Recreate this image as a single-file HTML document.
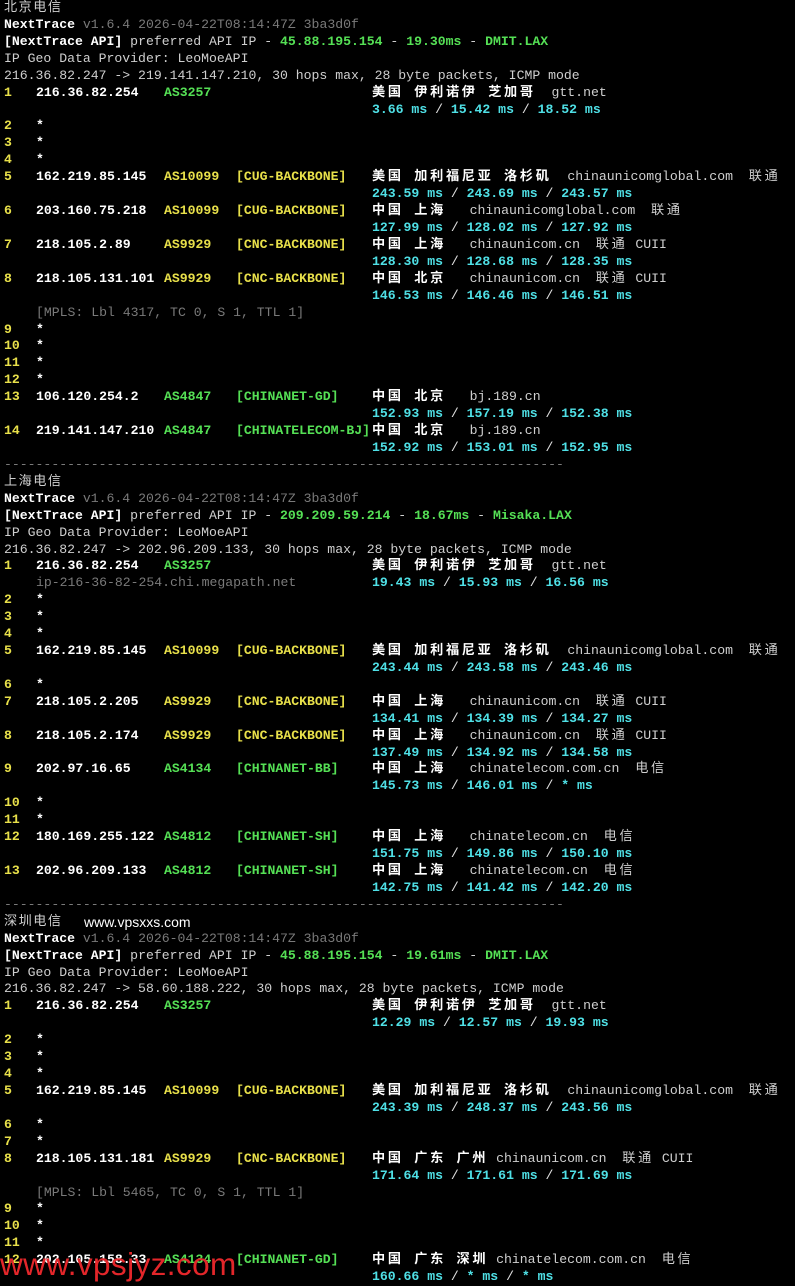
<!DOCTYPE html>
<html><head><meta charset="utf-8"><style>
html,body{margin:0;padding:0;background:#000;}
body{width:795px;height:1280px;overflow:hidden;position:relative;font-family:"Liberation Mono","Noto Sans CJK SC",monospace;font-size:13.15px;color:#cfcfcf;}
#t{position:absolute;left:0;top:0;width:795px;}
.r{position:relative;height:16.93px;line-height:16.93px;white-space:pre;padding-left:4px;}
.r i{font-style:normal;position:absolute;top:0;}
.h{left:4px;color:#e8e04a;font-weight:bold;}
.a1{left:36px;color:#fff;font-weight:bold;}
.a2{left:164px;font-weight:bold;}
.a3{left:236px;font-weight:bold;}
.a4{left:372px;}
.g{color:#55e055;}
.y{color:#e8e04a;}
.cy{color:#4fe0e6;font-weight:bold;}
.w{color:#fff;font-weight:bold;}
.gr{color:#7a7a7a;}
b.c{color:#fff;font-weight:bold;letter-spacing:2.7px;font-family:"Liberation Mono","Noto Sans CJK SC",monospace;}
span.c2{letter-spacing:2.7px;color:#cfcfcf;}
.sl{color:#e0e0e0;font-weight:normal;}
.star{left:36px;color:#fff;font-weight:bold;}
.hd{letter-spacing:1.5px;color:#cfcfcf;}
.wm{position:absolute;left:0;top:1246px;font-family:"Liberation Sans",sans-serif;font-size:31.5px;color:#e3262a;letter-spacing:0.4px;}
</style></head><body><div id="t">
<div class="r"><span class="hd">北京电信</span></div>
<div class="r"><span class="w">NextTrace</span> <span class="gr">v1.6.4 2026-04-22T08:14:47Z 3ba3d0f</span></div>
<div class="r"><span class="w">[NextTrace API]</span> preferred API IP - <span class="g" style="font-weight:bold">45.88.195.154</span> - <span class="g" style="font-weight:bold">19.30ms</span> - <span class="g" style="font-weight:bold">DMIT.LAX</span></div>
<div class="r">IP Geo Data Provider: LeoMoeAPI</div>
<div class="r">216.36.82.247 -&gt; 219.141.147.210, 30 hops max, 28 byte packets, ICMP mode</div>
<div class="r"><i class="h">1</i><i class="a1">216.36.82.254</i><i class="a2 g">AS3257</i><i class="a4"><b class="c">美国 伊利诺伊 芝加哥</b>  gtt.net</i></div>
<div class="r"><i class="a4 cy">3.66 ms <span class="sl">/</span> 15.42 ms <span class="sl">/</span> 18.52 ms</i></div>
<div class="r"><i class="h">2</i><i class="star">*</i></div>
<div class="r"><i class="h">3</i><i class="star">*</i></div>
<div class="r"><i class="h">4</i><i class="star">*</i></div>
<div class="r"><i class="h">5</i><i class="a1">162.219.85.145</i><i class="a2 y">AS10099</i><i class="a3 y">[CUG-BACKBONE]</i><i class="a4"><b class="c">美国 加利福尼亚 洛杉矶</b>  chinaunicomglobal.com  <span class="c2">联通</span></i></div>
<div class="r"><i class="a4 cy">243.59 ms <span class="sl">/</span> 243.69 ms <span class="sl">/</span> 243.57 ms</i></div>
<div class="r"><i class="h">6</i><i class="a1">203.160.75.218</i><i class="a2 y">AS10099</i><i class="a3 y">[CUG-BACKBONE]</i><i class="a4"><b class="c">中国 上海</b>   chinaunicomglobal.com  <span class="c2">联通</span></i></div>
<div class="r"><i class="a4 cy">127.99 ms <span class="sl">/</span> 128.02 ms <span class="sl">/</span> 127.92 ms</i></div>
<div class="r"><i class="h">7</i><i class="a1">218.105.2.89</i><i class="a2 y">AS9929</i><i class="a3 y">[CNC-BACKBONE]</i><i class="a4"><b class="c">中国 上海</b>   chinaunicom.cn  <span class="c2">联通</span> CUII</i></div>
<div class="r"><i class="a4 cy">128.30 ms <span class="sl">/</span> 128.68 ms <span class="sl">/</span> 128.35 ms</i></div>
<div class="r"><i class="h">8</i><i class="a1">218.105.131.101</i><i class="a2 y">AS9929</i><i class="a3 y">[CNC-BACKBONE]</i><i class="a4"><b class="c">中国 北京</b>   chinaunicom.cn  <span class="c2">联通</span> CUII</i></div>
<div class="r"><i class="a4 cy">146.53 ms <span class="sl">/</span> 146.46 ms <span class="sl">/</span> 146.51 ms</i></div>
<div class="r"><i class="gr" style="left:36px">[MPLS: Lbl 4317, TC 0, S 1, TTL 1]</i></div>
<div class="r"><i class="h">9</i><i class="star">*</i></div>
<div class="r"><i class="h">10</i><i class="star">*</i></div>
<div class="r"><i class="h">11</i><i class="star">*</i></div>
<div class="r"><i class="h">12</i><i class="star">*</i></div>
<div class="r"><i class="h">13</i><i class="a1">106.120.254.2</i><i class="a2 g">AS4847</i><i class="a3 g">[CHINANET-GD]</i><i class="a4"><b class="c">中国 北京</b>   bj.189.cn</i></div>
<div class="r"><i class="a4 cy">152.93 ms <span class="sl">/</span> 157.19 ms <span class="sl">/</span> 152.38 ms</i></div>
<div class="r"><i class="h">14</i><i class="a1">219.141.147.210</i><i class="a2 g">AS4847</i><i class="a3 g">[CHINATELECOM-BJ]</i><i class="a4"><b class="c">中国 北京</b>   bj.189.cn</i></div>
<div class="r"><i class="a4 cy">152.92 ms <span class="sl">/</span> 153.01 ms <span class="sl">/</span> 152.95 ms</i></div>
<div class="r gr">-----------------------------------------------------------------------</div>
<div class="r"><span class="hd">上海电信</span></div>
<div class="r"><span class="w">NextTrace</span> <span class="gr">v1.6.4 2026-04-22T08:14:47Z 3ba3d0f</span></div>
<div class="r"><span class="w">[NextTrace API]</span> preferred API IP - <span class="g" style="font-weight:bold">209.209.59.214</span> - <span class="g" style="font-weight:bold">18.67ms</span> - <span class="g" style="font-weight:bold">Misaka.LAX</span></div>
<div class="r">IP Geo Data Provider: LeoMoeAPI</div>
<div class="r">216.36.82.247 -&gt; 202.96.209.133, 30 hops max, 28 byte packets, ICMP mode</div>
<div class="r"><i class="h">1</i><i class="a1">216.36.82.254</i><i class="a2 g">AS3257</i><i class="a4"><b class="c">美国 伊利诺伊 芝加哥</b>  gtt.net</i></div>
<div class="r"><i class="gr" style="left:36px">ip-216-36-82-254.chi.megapath.net</i><i class="a4 cy">19.43 ms <span class="sl">/</span> 15.93 ms <span class="sl">/</span> 16.56 ms</i></div>
<div class="r"><i class="h">2</i><i class="star">*</i></div>
<div class="r"><i class="h">3</i><i class="star">*</i></div>
<div class="r"><i class="h">4</i><i class="star">*</i></div>
<div class="r"><i class="h">5</i><i class="a1">162.219.85.145</i><i class="a2 y">AS10099</i><i class="a3 y">[CUG-BACKBONE]</i><i class="a4"><b class="c">美国 加利福尼亚 洛杉矶</b>  chinaunicomglobal.com  <span class="c2">联通</span></i></div>
<div class="r"><i class="a4 cy">243.44 ms <span class="sl">/</span> 243.58 ms <span class="sl">/</span> 243.46 ms</i></div>
<div class="r"><i class="h">6</i><i class="star">*</i></div>
<div class="r"><i class="h">7</i><i class="a1">218.105.2.205</i><i class="a2 y">AS9929</i><i class="a3 y">[CNC-BACKBONE]</i><i class="a4"><b class="c">中国 上海</b>   chinaunicom.cn  <span class="c2">联通</span> CUII</i></div>
<div class="r"><i class="a4 cy">134.41 ms <span class="sl">/</span> 134.39 ms <span class="sl">/</span> 134.27 ms</i></div>
<div class="r"><i class="h">8</i><i class="a1">218.105.2.174</i><i class="a2 y">AS9929</i><i class="a3 y">[CNC-BACKBONE]</i><i class="a4"><b class="c">中国 上海</b>   chinaunicom.cn  <span class="c2">联通</span> CUII</i></div>
<div class="r"><i class="a4 cy">137.49 ms <span class="sl">/</span> 134.92 ms <span class="sl">/</span> 134.58 ms</i></div>
<div class="r"><i class="h">9</i><i class="a1">202.97.16.65</i><i class="a2 g">AS4134</i><i class="a3 g">[CHINANET-BB]</i><i class="a4"><b class="c">中国 上海</b>   chinatelecom.com.cn  <span class="c2">电信</span></i></div>
<div class="r"><i class="a4 cy">145.73 ms <span class="sl">/</span> 146.01 ms <span class="sl">/</span> * ms</i></div>
<div class="r"><i class="h">10</i><i class="star">*</i></div>
<div class="r"><i class="h">11</i><i class="star">*</i></div>
<div class="r"><i class="h">12</i><i class="a1">180.169.255.122</i><i class="a2 g">AS4812</i><i class="a3 g">[CHINANET-SH]</i><i class="a4"><b class="c">中国 上海</b>   chinatelecom.cn  <span class="c2">电信</span></i></div>
<div class="r"><i class="a4 cy">151.75 ms <span class="sl">/</span> 149.86 ms <span class="sl">/</span> 150.10 ms</i></div>
<div class="r"><i class="h">13</i><i class="a1">202.96.209.133</i><i class="a2 g">AS4812</i><i class="a3 g">[CHINANET-SH]</i><i class="a4"><b class="c">中国 上海</b>   chinatelecom.cn  <span class="c2">电信</span></i></div>
<div class="r"><i class="a4 cy">142.75 ms <span class="sl">/</span> 141.42 ms <span class="sl">/</span> 142.20 ms</i></div>
<div class="r gr">-----------------------------------------------------------------------</div>
<div class="r"><span class="hd">深圳电信</span><i style="left:84px;color:#fff;font-family:'Liberation Sans',sans-serif;font-size:14px">www.vpsxxs.com</i></div>
<div class="r"><span class="w">NextTrace</span> <span class="gr">v1.6.4 2026-04-22T08:14:47Z 3ba3d0f</span></div>
<div class="r"><span class="w">[NextTrace API]</span> preferred API IP - <span class="g" style="font-weight:bold">45.88.195.154</span> - <span class="g" style="font-weight:bold">19.61ms</span> - <span class="g" style="font-weight:bold">DMIT.LAX</span></div>
<div class="r">IP Geo Data Provider: LeoMoeAPI</div>
<div class="r">216.36.82.247 -&gt; 58.60.188.222, 30 hops max, 28 byte packets, ICMP mode</div>
<div class="r"><i class="h">1</i><i class="a1">216.36.82.254</i><i class="a2 g">AS3257</i><i class="a4"><b class="c">美国 伊利诺伊 芝加哥</b>  gtt.net</i></div>
<div class="r"><i class="a4 cy">12.29 ms <span class="sl">/</span> 12.57 ms <span class="sl">/</span> 19.93 ms</i></div>
<div class="r"><i class="h">2</i><i class="star">*</i></div>
<div class="r"><i class="h">3</i><i class="star">*</i></div>
<div class="r"><i class="h">4</i><i class="star">*</i></div>
<div class="r"><i class="h">5</i><i class="a1">162.219.85.145</i><i class="a2 y">AS10099</i><i class="a3 y">[CUG-BACKBONE]</i><i class="a4"><b class="c">美国 加利福尼亚 洛杉矶</b>  chinaunicomglobal.com  <span class="c2">联通</span></i></div>
<div class="r"><i class="a4 cy">243.39 ms <span class="sl">/</span> 248.37 ms <span class="sl">/</span> 243.56 ms</i></div>
<div class="r"><i class="h">6</i><i class="star">*</i></div>
<div class="r"><i class="h">7</i><i class="star">*</i></div>
<div class="r"><i class="h">8</i><i class="a1">218.105.131.181</i><i class="a2 y">AS9929</i><i class="a3 y">[CNC-BACKBONE]</i><i class="a4"><b class="c">中国 广东 广州</b> chinaunicom.cn  <span class="c2">联通</span> CUII</i></div>
<div class="r"><i class="a4 cy">171.64 ms <span class="sl">/</span> 171.61 ms <span class="sl">/</span> 171.69 ms</i></div>
<div class="r"><i class="gr" style="left:36px">[MPLS: Lbl 5465, TC 0, S 1, TTL 1]</i></div>
<div class="r"><i class="h">9</i><i class="star">*</i></div>
<div class="r"><i class="h">10</i><i class="star">*</i></div>
<div class="r"><i class="h">11</i><i class="star">*</i></div>
<div class="r"><i class="h">12</i><i class="a1">202.105.158.33</i><i class="a2 g">AS4134</i><i class="a3 g">[CHINANET-GD]</i><i class="a4"><b class="c">中国 广东 深圳</b> chinatelecom.com.cn  <span class="c2">电信</span></i></div>
<div class="r"><i class="a4 cy">160.66 ms <span class="sl">/</span> * ms <span class="sl">/</span> * ms</i></div>
</div>
<div class="wm">www.vpsjyz.com</div>
</body></html>
